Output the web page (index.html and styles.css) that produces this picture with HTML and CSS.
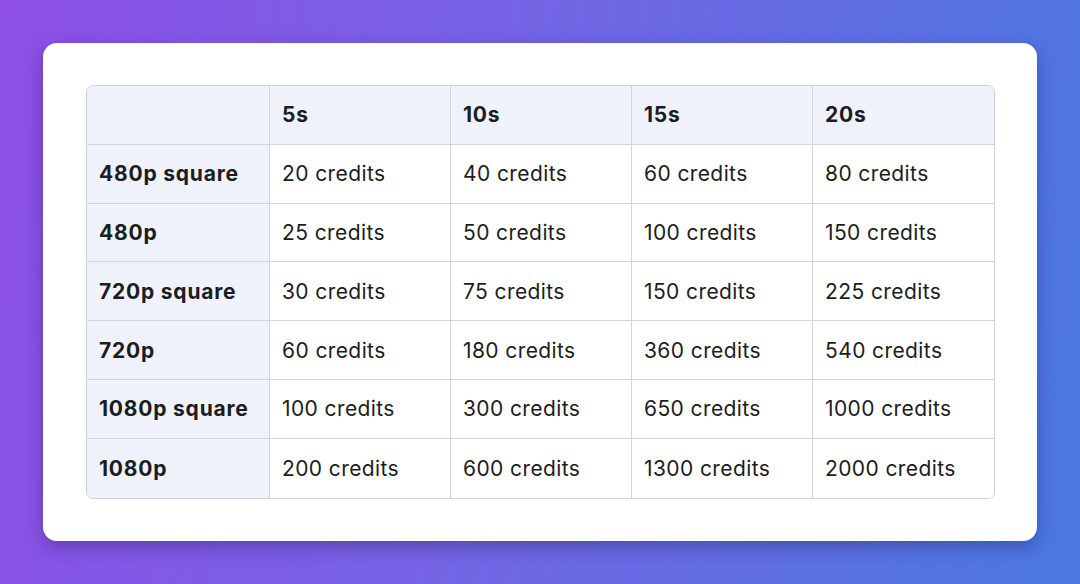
FILE: index.html
```html
<!DOCTYPE html>
<html>
<head>
<meta charset="utf-8">
<link rel="stylesheet" href="styles.css">
</head>
<body>
<div class="card">
  <table class="pricing">
    <colgroup><col class="col-label"><col><col><col><col></colgroup>
    <thead>
      <tr><th class="corner"></th><th>5s</th><th>10s</th><th>15s</th><th>20s</th></tr>
    </thead>
    <tbody>
      <tr><th>480p square</th><td>20 credits</td><td>40 credits</td><td>60 credits</td><td>80 credits</td></tr>
      <tr><th>480p</th><td>25 credits</td><td>50 credits</td><td>100 credits</td><td>150 credits</td></tr>
      <tr><th>720p square</th><td>30 credits</td><td>75 credits</td><td>150 credits</td><td>225 credits</td></tr>
      <tr><th>720p</th><td>60 credits</td><td>180 credits</td><td>360 credits</td><td>540 credits</td></tr>
      <tr><th>1080p square</th><td>100 credits</td><td>300 credits</td><td>650 credits</td><td>1000 credits</td></tr>
      <tr><th>1080p</th><td>200 credits</td><td>600 credits</td><td>1300 credits</td><td>2000 credits</td></tr>
    </tbody>
  </table>
</div>
</body>
</html>
```

FILE: styles.css
```css
html, body {
  margin: 0;
  height: 100%;
}
body {
  box-sizing: border-box;
  padding: 43px;
  background: linear-gradient(100deg, #8d4fe6 0%, #7464e4 45%, #4a78e2 100%);
  font-family: Inter, "Noto Sans", sans-serif;
  color: #1c1d21;
}
.card {
  box-sizing: border-box;
  height: 498px;
  background: #ffffff;
  border-radius: 14px;
  padding: 42px 42px 0 43px;
  box-shadow: 0 6px 18px rgba(30, 20, 90, 0.35);
}
.pricing {
  width: 100%;
  table-layout: fixed;
  border-collapse: separate;
  border-spacing: 0;
  border: 1px solid #cfd0d6;
  border-radius: 7px;
  overflow: hidden;
  font-size: 21px;
  letter-spacing: 0.4px;
}
.col-label {
  width: 183px;
}
.pricing th,
.pricing td {
  height: 58.8px;
  box-sizing: border-box;
  padding: 0 12px;
  text-align: left;
  vertical-align: middle;
  border-right: 1px solid #d3d4d9;
  border-bottom: 1px solid #d3d4d9;
  white-space: nowrap;
}
.pricing tr > :last-child {
  border-right: none;
}
.pricing tbody tr:last-child > * {
  border-bottom: none;
}
.pricing th {
  font-weight: 700;
  letter-spacing: 0.8px;
  background: #eff2fb;
}
.pricing td {
  font-weight: 400;
  background: #ffffff;
}
```
